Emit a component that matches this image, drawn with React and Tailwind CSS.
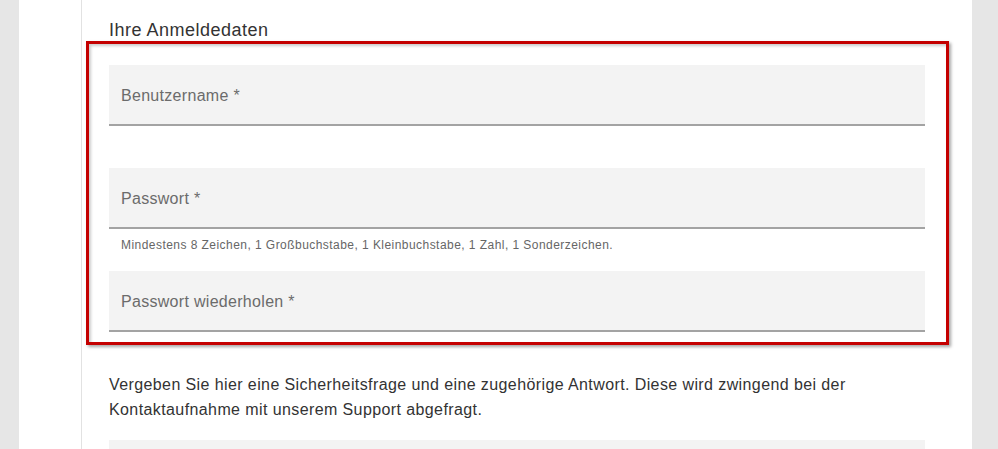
import React from 'react';

const Field = ({ label, className = '' }) => (
    <div className={`h-[61px] bg-[#f3f3f3] border-b-2 border-[#a3a3a3] flex items-center pl-[12px] pt-[2px] ${className}`}>
        <span className="text-[16px] tracking-[0.3px] text-[#6b6b6b]">{label}</span>
    </div>
);

const App = () => {
    return (
        <div className="h-[449px] overflow-hidden bg-[#e6e6e6] flex font-['Liberation_Sans',Arial,sans-serif]">
            <div className="w-[19px] shrink-0" />
            <div className="w-[953px] shrink-0 bg-white pl-[62px]">
                <div className="h-full border-l border-[#e2e2e2] pl-[27px] pr-[47px]">
                    <h2 className="pt-[18px] text-[18px] leading-[24px] tracking-[0.5px] text-[#333]">Ihre Anmeldedaten</h2>

                    <div className="relative mt-[23px]">
                        <Field label="Benutzername *" />
                        <Field label="Passwort *" className="mt-[42px]" />
                        <p className="mt-[9px] pl-[12px] text-[12px] leading-[14px] tracking-[0.45px] text-[#666]">
                            Mindestens 8 Zeichen, 1 Großbuchstabe, 1 Kleinbuchstabe, 1 Zahl, 1 Sonderzeichen.
                        </p>
                        <Field label="Passwort wiederholen *" className="mt-[19px]" />

                        {/* red annotation frame */}
                        <div className="absolute -left-[23px] -top-[24px] -right-[24px] -bottom-[13px] border-[3px] border-[#c40000] shadow-[2px_2px_3px_rgba(0,0,0,0.35),inset_2px_2px_3px_rgba(0,0,0,0.2)] pointer-events-none" />
                    </div>

                    <p className="mt-[40px] text-[16px] leading-[25px] tracking-[0.4px] text-[#333]">
                        Vergeben Sie hier eine Sicherheitsfrage und eine zugehörige Antwort. Diese wird zwingend bei der
                        Kontaktaufnahme mit unserem Support abgefragt.
                    </p>
                    <div className="mt-[18px] h-[61px] bg-[#f3f3f3]" />
                </div>
            </div>
        </div>
    );
};

export default App;
